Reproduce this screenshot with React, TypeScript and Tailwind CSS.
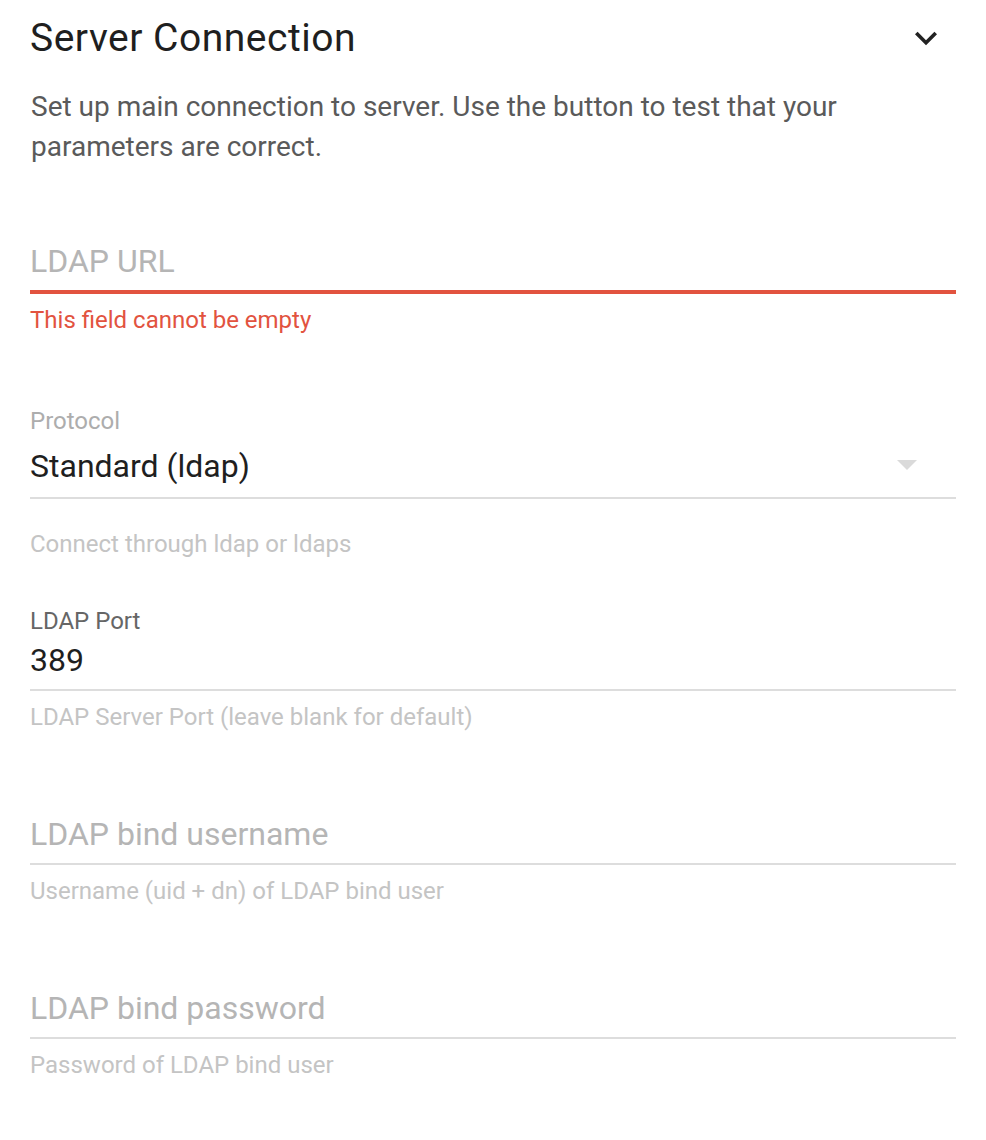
import { ReactNode } from "react";

const FONT = { fontFamily: "Roboto, 'Noto Sans', sans-serif" };

interface FieldProps {
  label?: string;
  value?: string;
  placeholder?: string;
  helper: string;
  error?: boolean;
  className?: string;
}

function TextField({ label, value, placeholder, helper, error, className = "" }: FieldProps) {
  return (
    <div className={className}>
      <div className="h-[32px] text-[24px] leading-[32px] text-[#666]">{label ?? ""}</div>
      <div
        className={`pt-[3px] pb-[9px] text-[32px] leading-[40px] ${
          error ? "border-b-4 border-[#e2533f]" : "border-b-2 border-[#dddddd]"
        } ${value ? "text-[#1f1f1f]" : "text-[#b5b5b5]"}`}
      >
        {value ?? placeholder}
      </div>
      <div className={`mt-[12px] text-[24px] leading-[28px] ${error ? "text-[#e2533f]" : "text-[#c4c4c4]"}`}>
        {helper}
      </div>
    </div>
  );
}

function SelectField({ label, value, helper, className = "" }: { label: string; value: string; helper: string; className?: string }) {
  return (
    <div className={className}>
      <div className="h-[32px] text-[24px] leading-[32px] text-[#adadad]">{label}</div>
      <div className="mt-[9px] pb-[11px] border-b-2 border-[#dddddd] flex items-center justify-between">
        <span className="text-[32px] leading-[40px] text-[#1f1f1f]">{value}</span>
        <svg width="20" height="10" viewBox="0 0 10 5" className="mr-[39px] -mt-[3px]">
          <path d="M0 0l5 5 5-5z" fill="#dadada" />
        </svg>
      </div>
      <div className="mt-[31px] text-[24px] leading-[28px] text-[#c4c4c4]">{helper}</div>
    </div>
  );
}

function Section({ title, children }: { title: string; children: ReactNode }) {
  return (
    <div>
      <div className="flex items-center justify-between h-[48px] mt-[14px]">
        <h2 className="text-[39px] leading-[48px] tracking-[0.5px] text-[#1f1f1f] font-normal">{title}</h2>
        <svg width="44" height="44" viewBox="0 0 24 24" className="mr-[8px]">
          <path d="M16.59 8.59L12 13.17 7.41 8.59 6 10l6 6 6-6z" fill="#222" />
        </svg>
      </div>
      {children}
    </div>
  );
}

export default function App() {
  return (
    <div className="min-h-[1140px] bg-white pl-[30px] pr-[30px]" style={FONT}>
      <Section title="Server Connection">
        <p className="mt-[25px] text-[28px] leading-[40px] text-[#5a5a5a] pl-[1px]">
          Set up main connection to server. Use the button to test that your parameters are correct.
        </p>
        <TextField className="mt-[39px]" placeholder="LDAP URL" helper="This field cannot be empty" error />
        <SelectField className="mt-[71px]" label="Protocol" value="Standard (ldap)" helper="Connect through ldap or ldaps" />
        <TextField className="mt-[47px]" label="LDAP Port" value="389" helper="LDAP Server Port (leave blank for default)" />
        <TextField className="mt-[48px]" placeholder="LDAP bind username" helper="Username (uid + dn) of LDAP bind user" />
        <TextField className="mt-[48px]" placeholder="LDAP bind password" helper="Password of LDAP bind user" />
      </Section>
    </div>
  );
}
